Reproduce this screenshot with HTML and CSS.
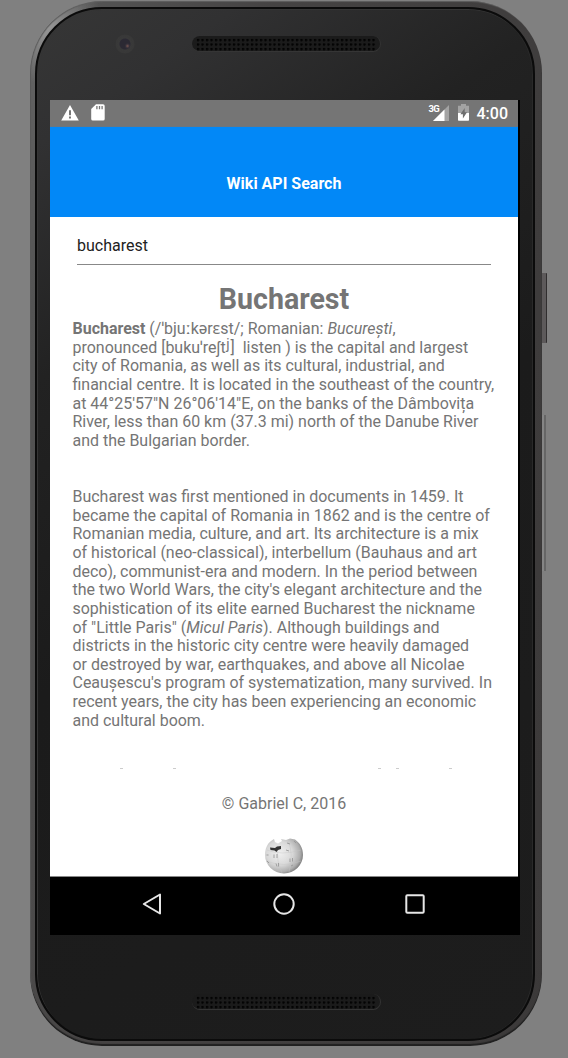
FILE: index.html
```html
<!DOCTYPE html>
<html lang="en">
<head>
<meta charset="utf-8">
<title>Wiki API Search</title>
<link rel="stylesheet" href="styles.css">
</head>
<body>
<div class="phone">
  <span class="side-button power"></span>
  <span class="side-button volume"></span>
  <div class="face">
    <div class="top">
      <span class="camera"></span>
      <span class="grille"><span class="holes"></span></span>
    </div>
    <div class="display">
      <div class="screen">
        <div class="status">
          <svg class="warn" width="18" height="16" viewBox="0 0 18 16"><path fill="#fff" fill-rule="evenodd" d="M9 0 L17.8 15.4 H.2Z M8 5.2h2v5H8Z M8 11.4h2v2H8Z"/></svg>
          <svg class="sd" width="14" height="17" viewBox="0 0 14 17"><path fill="#fff" d="M5 .2h7q1.7 0 1.7 1.7v13q0 1.7-1.7 1.7H1.9Q.2 16.600.2 14.900V5Z"/><path stroke="#777" stroke-width="1.300" d="M5.900 2v3.300M8.500 2v3.300M11.100 2v3.300"/></svg>
          <span class="net">3G</span>
          <svg class="signal" width="16" height="16" viewBox="0 0 16 16"><path fill="#a3a3a3" d="M16 0V16H0Z"/><path fill="#fff" d="M11.500 4.500V16H0Z"/></svg>
          <svg class="battery" width="11" height="17" viewBox="0 0 11 17"><path fill="#a3a3a3" d="M3 0h5v1.700h3V9H0V1.700h3Z"/><path fill="#fff" d="M0 9h11v7q0 .7-.7.7H.7Q0 16.700 0 16Z"/><path fill="#6e6e6e" d="M6.700 4 2.400 10.300h2.500v4.200L9 8.300H6.700Z"/></svg>
          <span class="clock">4:00</span>
        </div>
        <div class="header">Wiki API Search</div>
        <div class="search">bucharest</div>
        <h1 class="title">Bucharest</h1>
        <div class="article">
          <p><b>Bucharest</b> (/ˈbjuːkərɛst/; Romanian: <i>București</i>,<br>pronounced [bukuˈreʃt<span class="sup">j</span>]&nbsp; listen ) is the capital and largest<br>city of Romania, as well as its cultural, industrial, and<br>financial centre. It is located in the southeast of the country,<br>at 44°25′57″N 26°06′14″E, on the banks of the Dâmbovița<br>River, less than 60 km (37.3 mi) north of the Danube River<br>and the Bulgarian border.</p>
          <p>Bucharest was first mentioned in documents in 1459. It<br>became the capital of Romania in 1862 and is the centre of<br>Romanian media, culture, and art. Its architecture is a mix<br>of historical (neo-classical), interbellum (Bauhaus and art<br>deco), communist-era and modern. In the period between<br>the two World Wars, the city's elegant architecture and the<br>sophistication of its elite earned Bucharest the nickname<br>of "Little Paris" (<i>Micul Paris</i>). Although buildings and<br>districts in the historic city centre were heavily damaged<br>or destroyed by war, earthquakes, and above all Nicolae<br>Ceaușescu's program of systematization, many survived. In<br>recent years, the city has been experiencing an economic<br>and cultural boom.</p>
          <div class="peek"><i></i><i></i><i></i><i></i><i></i></div>
        </div>
        <div class="credit">© Gabriel C, 2016</div>
        <div class="logo">
          <svg width="40" height="36" viewBox="0 0 40 36">
            <defs><radialGradient id="globe" cx=".38" cy=".42" r=".68"><stop offset="0" stop-color="#f0f0f0"/><stop offset=".5" stop-color="#d9d9d9"/><stop offset=".8" stop-color="#adadad"/><stop offset="1" stop-color="#666"/></radialGradient></defs>
            <path fill="url(#globe)" d="M7 3 10 1 11 4 14 5.500 18 3 17 1 22 2 26 .6 31 1.500C36 5 39 10 39 17C39 27 30.500 35.400 20 35.400S1 27 1 17C1 11 3 6 7 3Z"/>
            <path fill="none" stroke="#c4c4c4" stroke-width=".4" d="M3 12Q17 18 37 12M2 23Q20 30 37 23M14 9Q12 23 18 35M24 3Q30 16 25 34"/>
            <path fill="#333" d="M6 9.500 11 10 13 8.500 17 8V11L14 12 12.500 14 10.500 12.500 6.500 12Z"/>
            <path fill="none" stroke="#999" stroke-width=".9" d="M10 16.500v3.500M13 16v4M12 25.500l1 3M14.500 25v3.500M26 20.500v3.500M28.500 20v3.500M22 12l3 1M2.500 17h2M3 23l2 2M27 28l2-1M23 5l3 1M30 3l2 2"/>
          </svg>
        </div>
      </div>
      <div class="nav">
        <svg width="20" height="22" viewBox="0 0 20 22"><path fill="none" stroke="#e6e6e6" stroke-width="2" stroke-linejoin="round" d="M18 1.500V20.500L1.800 11Z"/></svg>
        <svg width="22" height="22" viewBox="0 0 22 22"><circle cx="11" cy="11" r="9.700" fill="none" stroke="#e6e6e6" stroke-width="2"/></svg>
        <svg width="20" height="20" viewBox="0 0 20 20"><rect x="1.300" y="1.300" width="17.400" height="17.400" rx="1" fill="none" stroke="#e6e6e6" stroke-width="2"/></svg>
      </div>
    </div>
    <div class="bottom"><span class="grille"><span class="holes"></span></span></div>
  </div>
</div>
</body>
</html>
```
FILE: styles.css
```css
* { box-sizing: border-box; }
body { margin: 0; height: 1058px; overflow: hidden; background: #808080; font-family: Roboto, "Noto Sans", sans-serif; color: #757575; }
svg { display: block; flex: none; }

.phone {
  position: relative; width: 512px; height: 1045px; margin: 1px 0 0 30px;
  padding: 6px 7px 5px 5px; border-radius: 72px;
  background: radial-gradient(circle at 12px 22px, #a0a0a0 0, rgba(150,150,150,.6) 24px, transparent 60px), linear-gradient(100deg, #666 0, #545454 8%, #454343 35%, #3b3939 100%);
  box-shadow: inset 0 -2px 1px #202020, inset 1px 1px 1px #606060;
}
.side-button { position: absolute; }
.power { left: 512px; top: 272px; width: 5px; height: 70px; background: #5d5a5b; border-right: 1px solid #302e2f; border-radius: 0 1px 1px 0; }
.volume { left: 512px; top: 414px; width: 4px; height: 156px; background: #858585; border-right: 2px solid #666; }
.face {
  height: 1034px; border: 2px solid #0b0b0b; border-radius: 67px;
  background: linear-gradient(145deg, #363636 0, #313132 10%, #222 27%, #1b1b1b 50%, #1d1d1d 100%);
  box-shadow: inset 1px 1px 0 #353535, inset -1px 0 0 #292929;
  padding: 0 0 0 13px;
}
.top { height: 91px; display: flex; align-items: flex-start; }
.camera {
  width: 20px; height: 20px; margin: 25px 0 0 65px; border-radius: 50%; flex: none;
  background: radial-gradient(circle at 12.500px 12px, #76554f 0, #35303a 2px, transparent 3px), radial-gradient(circle at 50% 50%, #2b2933 0 5px, #393939 6px, #383838 9px, #333 10px);
}
.grille { display: block; width: 189px; height: 16px; border-radius: 8px; padding: 2px 4px; background: #1b1b1b; border-bottom: 1px solid #353535; border-right: 1px solid #333; }
.top .grille { margin: 27px 0 0 57px; }
.holes { display: block; height: 13px; background: radial-gradient(circle at 2px 2px, #030303 0 1px, transparent 1.600px) 0 0 / 4.500px 4.500px; }

.display { width: 470px; height: 835px; background: #000; }
.screen { width: 468px; height: 777px; background: #fff; border-bottom: 1px solid #888; display: flex; flex-direction: column; }
.status { height: 27px; flex: none; background: #757575; border-bottom: 1px solid #6a7782; display: flex; color: #fff; }
.warn { margin: 5px 0 0 11px; }
.sd { margin: 4px 0 0 12px; }
.net { margin: 3px 0 0 auto; width: 11px; font: bold 9.500px/11px Roboto, sans-serif; letter-spacing: -.6px; white-space: nowrap; position: relative; z-index: 1; }
.signal { margin: 5px 0 0 -7px; }
.battery { margin: 4px 0 0 9px; }
.clock { margin: 3px 10px 0 8px; font: 500 16px/21px Roboto, sans-serif; }
.header { height: 90px; flex: none; background: #0288f7; color: #fff; text-align: center; font-size: 16px; font-weight: bold; padding-top: 47px; line-height: 20px; }
.search { height: 48px; flex: none; margin: 0 27px; border-bottom: 1px solid #888; color: #212121; font-size: 16px; line-height: 20px; padding-top: 19px; }
.title { margin: 16px 0 0; font-size: 28.600px; line-height: 36px; text-align: center; flex: none; }
.article { height: 453px; flex: none; padding: 3px 0 0 22.500px; font-size: 15.970px; line-height: 18.650px; white-space: nowrap; }
.article p { margin: 0 0 37.340px; }
.sup { font-size: 14px; line-height: 0; position: relative; top: -4px; margin: 0 1px 0 .5px; }
/* Tips of the ascenders of the paragraph that is scrolled below the fold */
.peek { display: flex; margin-top: 38px; padding-left: 47px; }
.peek i { width: 3px; height: 1px; background: #ccc; }
.peek i:nth-child(2) { margin-left: 50px; }
.peek i:nth-child(3) { margin-left: 202px; }
.peek i:nth-child(4) { margin-left: 15px; }
.peek i:nth-child(5) { margin-left: 50px; }
.credit { height: 20px; margin-top: 24px; text-align: center; line-height: 20px; font-size: 16px; }
.logo { display: flex; justify-content: center; margin-top: 24px; }
.nav { height: 54px; display: flex; align-items: center; justify-content: space-between; padding: 0 95px 0 92px; }
.bottom .grille { margin: 59px 0 0 142px; }
```
